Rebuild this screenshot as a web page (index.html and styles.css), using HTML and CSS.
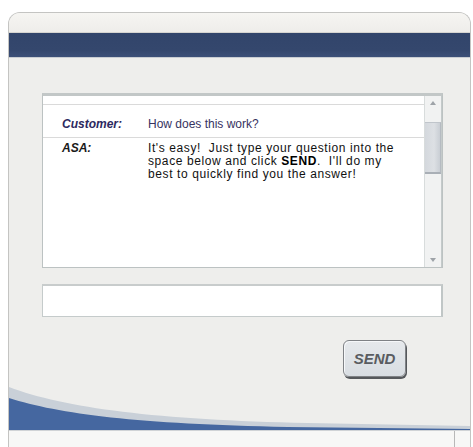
FILE: index.html
```html
<!DOCTYPE html>
<html lang="en">
<head>
<meta charset="utf-8">
<title>Ask ASA</title>
<link rel="stylesheet" href="styles.css">
</head>
<body>
<div class="window">
  <div class="top-band"></div>
  <div class="nav-band"></div>
  <div class="content">
    <div class="chat">
      <div class="log">
        <div class="row row-stub"></div>
        <div class="row">
          <div class="who who-customer">Customer:</div>
          <div class="msg msg-customer">How does this work?</div>
        </div>
        <div class="row row-last">
          <div class="who who-asa">ASA:</div>
          <div class="msg msg-asa">It's easy!&nbsp; Just type your question into the space below and click <b>SEND</b>.&nbsp; I'll do my best to quickly find you the answer!</div>
        </div>
      </div>
      <div class="scrollbar">
        <div class="arrow arrow-up"></div>
        <div class="track"><div class="thumb"></div></div>
        <div class="arrow arrow-down"></div>
      </div>
    </div>
    <div class="entry"></div>
    <div class="actions">
      <button class="send">SEND</button>
    </div>
  </div>
  <svg class="swoosh" viewBox="0 0 463 44" preserveAspectRatio="none">
    <path d="M0 1 C 55 22, 150 34, 300 37 L 463 40 L 463 44 L 0 44 Z" fill="#c9d0d8"/>
    <path d="M0 12 C 50 28, 130 38, 280 41 L 463 43 L 463 44 L 0 44 Z" fill="#4567a0"/>
  </svg>
  <div class="status">
    <div class="status-main"></div>
    <div class="status-end"></div>
  </div>
</div>
</body>
</html>
```

FILE: styles.css
```css
html, body {
  margin: 0;
  padding: 0;
  background: #ffffff;
}

body {
  font-family: "Liberation Sans", Arial, sans-serif;
}

.window {
  margin: 12px 0 0 8px;
  width: 463px;
  box-sizing: border-box;
  border: 1px solid #c4c4c2;
  border-bottom: none;
  border-radius: 12px 12px 0 0;
  background: #eeeeec;
  overflow: hidden;
}

.top-band {
  height: 19px;
  background: linear-gradient(#f6f5f2, #eeedea);
  border-bottom: 1px solid #d6d5d1;
}

.nav-band {
  height: 24px;
  background: linear-gradient(#32456b, #34476d 70%, #3c5078);
  border-bottom: 1px solid #c9cdd3;
}

.content {
  padding: 35px 0 0 33px;
}

/* conversation log */
.chat {
  width: 401px;
  height: 175px;
  box-sizing: border-box;
  border: 1px solid #bcc2c2;
  border-top: 3px solid #c2c7c7;
  background: #ffffff;
  display: flex;
}

.log {
  flex: 1;
  display: flex;
  flex-direction: column;
}

.row {
  display: flex;
  border-bottom: 1px solid #dadada;
  padding: 13px 0 0 19px;
  height: 33px;
  box-sizing: border-box;
  font-size: 12px;
  line-height: 13px;
}

.row-stub {
  height: 9px;
  padding: 0;
}

.row-last {
  flex: 1;
  border-bottom: none;
  padding-top: 4px;
}

.who {
  width: 86px;
  flex: none;
  font-weight: bold;
  font-style: italic;
}

.who-customer {
  color: #2c2960;
}

.who-asa {
  color: #1a1a1a;
}

.msg-customer {
  color: #37335f;
}

.msg-asa {
  color: #111111;
  width: 252px;
  letter-spacing: 0.6px;
}

.msg-asa b {
  color: #000000;
}

.scrollbar {
  width: 16px;
  flex: none;
  border-left: 1px solid #d8dcdc;
  border-right: 1px solid #c4caca;
  background: #f1f2f2;
  display: flex;
  flex-direction: column;
}

.arrow {
  height: 14px;
  display: flex;
  align-items: center;
  justify-content: center;
}

.arrow::before {
  content: "";
  border-left: 3px solid transparent;
  border-right: 3px solid transparent;
}

.arrow-up::before {
  border-bottom: 4px solid #9ea3a8;
}

.arrow-down::before {
  border-top: 4px solid #9ea3a8;
}

.track {
  flex: 1;
  padding-top: 12px;
}

.thumb {
  height: 49px;
  background: linear-gradient(90deg, #d4d8dd, #dde0e4 60%, #c9ced4);
  border-top: 1px solid #c0c5cb;
  border-bottom: 2px solid #a9afb6;
  border-right: 1px solid #b5bbc1;
}

/* question entry */
.entry {
  width: 401px;
  height: 33px;
  box-sizing: border-box;
  margin-top: 16px;
  background: #ffffff;
  border: 1px solid #c5cbcb;
  border-top: 2px solid #c8cccc;
  border-right: 2px solid #c0c6c6;
}

.actions {
  width: 364px;
  margin-top: 23px;
  display: flex;
  justify-content: flex-end;
}

.send {
  width: 63px;
  height: 37px;
  padding: 0;
  border: 1px solid #7f8286;
  border-radius: 6px;
  background: linear-gradient(#e6e9ec, #d8dde2);
  box-shadow: 1px 2px 0 #55585c, inset 1px 1px 0 #f6f8fa;
  font-family: "Liberation Sans", Arial, sans-serif;
  font-size: 15px;
  font-style: italic;
  font-weight: bold;
  color: #595c61;
}

/* footer wave and status strip */
.swoosh {
  display: block;
  width: 100%;
  height: 44px;
  margin-top: 9px;
}

.status {
  display: flex;
  height: 17px;
  background: #f7f7f6;
  border-top: 1px solid #d0d3d6;
}

.status-main {
  flex: 1;
  border-right: 1px solid #b8b8b8;
}

.status-end {
  width: 15px;
}
```
